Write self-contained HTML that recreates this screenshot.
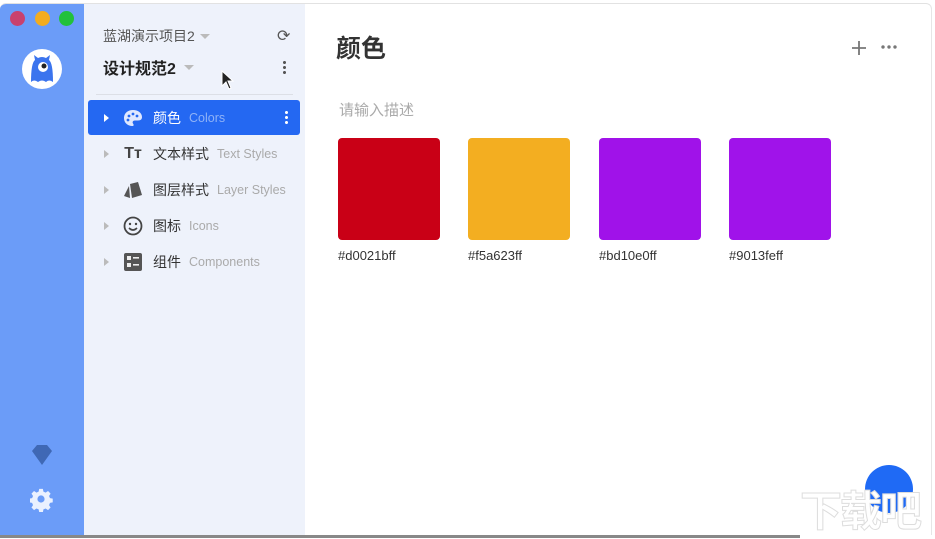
<!DOCTYPE html>
<html><head><meta charset="utf-8"><style>
*{margin:0;padding:0;box-sizing:border-box}
body{width:935px;height:538px;overflow:hidden;background:#fff;font-family:"Liberation Sans","Noto Sans CJK SC",sans-serif;position:relative}
.win{position:absolute;left:0;top:3px;width:932px;height:532px;background:#fff;border-top:1px solid #e2e2e2;border-right:1px solid #e6e6e6;border-radius:6px 6px 0 0;overflow:hidden}
.bar{position:absolute;left:0;top:0;width:84px;height:100%;background:#6b9cf8}
.side{position:absolute;left:84px;top:0;width:221px;height:100%;background:#eef2fb}
.dot{position:absolute;top:7px;width:15px;height:15px;border-radius:50%}
.abs{position:absolute}
.row{position:absolute;left:4px;width:212px;height:35px;display:flex;align-items:center;font-size:14px;color:#333}
.row .tri{width:0;height:0;border-left:5px solid #bbb;border-top:4px solid transparent;border-bottom:4px solid transparent;margin-left:16px;margin-right:14px}
.row .ic{width:20px;height:20px;margin-right:10px;display:flex;align-items:center;justify-content:center}
.row .en{font-size:12.5px;color:#aaa;margin-left:8px}
.sw{position:absolute;top:134px;width:102px;height:102px;border-radius:4px}
.lb{position:absolute;top:244px;font-size:13px;color:#333}
</style></head><body>
<div class="win">
<div class="bar">
 <div class="dot" style="left:10px;background:#c9416e"></div>
 <div class="dot" style="left:35px;background:#f3ac1f"></div>
 <div class="dot" style="left:59px;background:#22c13a"></div>
 <svg class="abs" style="left:22px;top:45px" width="40" height="40" viewBox="0 0 40 40"><circle cx="20" cy="20" r="20" fill="#fff"/><path d="M9 33 Q9 14 13 11 L12 6 L16 9 Q20 7 24 9 L28 6 L27 11 Q31 14 31 33 Q27 30 24 33 Q20 30 16 33 Q12 30 9 33Z" fill="#3b74ee"/><circle cx="21" cy="18" r="5" fill="#fff"/><circle cx="22" cy="17" r="2.5" fill="#222"/></svg>
 <svg class="abs" style="left:30px;top:440px" width="24" height="22" viewBox="0 0 24 22"><path d="M2 7 L7 1 H17 L22 7 L12 21Z" fill="#3f68b5"/></svg>
 <svg class="abs" style="left:30px;top:484px" width="24" height="24" viewBox="0 0 24 24"><path d="M10 1h4l.6 3 2.4 1 2.6-1.7 2.8 2.8L20.7 8.7l1 2.3 3 .6v4l-3 .6-1 2.4 1.7 2.6-2.8 2.8-2.6-1.7-2.4 1-.6 3h-4l-.6-3-2.4-1-2.6 1.7-2.8-2.8 1.7-2.6-1-2.4-3-.6v-4l3-.6 1-2.3L1.6 6.1 4.4 3.3 7 5l2.4-1z" transform="scale(.92)" fill="#eaf1ff"/><circle cx="11" cy="11" r="3.6" fill="#6b9cf8"/></svg>
</div>
<div class="side">
 <div class="abs" style="left:19px;top:22px;font-size:14px;color:#555">蓝湖演示项目2</div>
 <div class="abs" style="left:116px;top:30px;border-top:5px solid #bbb;border-left:5px solid transparent;border-right:5px solid transparent"></div>
 <div class="abs" style="left:193px;top:22px;font-size:16px;color:#555">⟳</div>
 <div class="abs" style="left:19px;top:51px;font-size:16px;font-weight:bold;color:#222">设计规范2</div>
 <div class="abs" style="left:100px;top:61px;border-top:5px solid #bbb;border-left:5px solid transparent;border-right:5px solid transparent"></div>
 <svg class="abs" style="left:137px;top:66px" width="14" height="22" viewBox="0 0 14 22"><path d="M1 1 L1 16 L5 12 L8 19 L10 18 L7 11 L12 11Z" fill="#222" stroke="#fff" stroke-width="1"/></svg>
 <div class="abs" style="left:199px;top:56px;width:3px;height:15px;background:radial-gradient(circle,#555 1.4px,transparent 1.6px) 0 0/3px 5px"></div>
 <div class="abs" style="left:12px;top:90px;width:197px;height:1px;background:#dcdfe6"></div>
 <div class="row" style="top:96px;background:#2468f2;border-radius:3px;color:#fff">
  <div class="tri" style="border-left-color:#fff"></div>
  <div class="ic"><svg width="20" height="18" viewBox="0 0 20 18"><path d="M10 1C4 1 1 5 1 9c0 5 4 8 8 8 2 0 2-1 1-2.5-1-1.5 0-3 2-3h3c3 0 4-1.5 4-3.5C19 4 15 1 10 1z" fill="#dfe8ff"/><circle cx="6" cy="7" r="1.4" fill="#2468f2"/><circle cx="10" cy="5" r="1.4" fill="#2468f2"/><circle cx="14" cy="7" r="1.4" fill="#2468f2"/><circle cx="5" cy="11" r="1.4" fill="#2468f2"/></svg></div>
  <span>颜色</span><span class="en" style="color:#8fb2f7">Colors</span>
  <div style="margin-left:auto;margin-right:12px;width:3px;height:15px;background:radial-gradient(circle,#fff 1.4px,transparent 1.6px) 0 0/3px 5px"></div>
 </div>
 <div class="row" style="top:132px"><div class="tri"></div><div class="ic" style="font-weight:bold;font-size:16px;color:#444">Tт</div><span>文本样式</span><span class="en">Text Styles</span></div>
 <div class="row" style="top:168px"><div class="tri"></div><div class="ic"><svg width="20" height="18" viewBox="0 0 20 18"><path d="M1 15 L6 5 L7 17Z" fill="#555"/><path d="M7 3 L15 1 L19 14 L9 17Z" fill="#555"/></svg></div><span>图层样式</span><span class="en">Layer Styles</span></div>
 <div class="row" style="top:204px"><div class="tri"></div><div class="ic"><svg width="20" height="20" viewBox="0 0 20 20"><circle cx="10" cy="10" r="8.5" fill="none" stroke="#444" stroke-width="1.8"/><circle cx="7" cy="8" r="1.2" fill="#444"/><circle cx="13" cy="8" r="1.2" fill="#444"/><path d="M6 12 Q10 16 14 12" fill="none" stroke="#444" stroke-width="1.6"/></svg></div><span>图标</span><span class="en">Icons</span></div>
 <div class="row" style="top:240px"><div class="tri"></div><div class="ic"><svg width="18" height="18" viewBox="0 0 18 18"><rect x="0" y="0" width="18" height="18" rx="2" fill="#555"/><rect x="3" y="3" width="4" height="4" fill="#eee"/><rect x="3" y="10" width="4" height="4" fill="#eee"/><rect x="9" y="4" width="6" height="1.6" fill="#eee"/><rect x="9" y="11" width="6" height="1.6" fill="#eee"/></svg></div><span>组件</span><span class="en">Components</span></div>
</div>
<div class="abs" style="left:336px;top:25px;font-size:25px;font-weight:bold;color:#333">颜色</div>
<svg class="abs" style="left:851px;top:36px" width="16" height="16" viewBox="0 0 16 16"><path d="M8 1V15M1 8H15" stroke="#777" stroke-width="1.8"/></svg>
<div class="abs" style="left:880px;top:41px;width:17px;height:4px;background:radial-gradient(circle,#777 1.6px,transparent 1.9px) 0 0/6px 4px"></div>
<div class="abs" style="left:339px;top:95px;font-size:15px;color:#aaa">请输入描述</div>
<div class="sw" style="left:338px;background:#c90016"></div>
<div class="sw" style="left:468px;background:#f3ae21"></div>
<div class="sw" style="left:599px;background:#a012e9"></div>
<div class="sw" style="left:729px;background:#a013ea"></div>
<div class="lb" style="left:338px">#d0021bff</div>
<div class="lb" style="left:468px">#f5a623ff</div>
<div class="lb" style="left:599px">#bd10e0ff</div>
<div class="lb" style="left:729px">#9013feff</div>
<div class="abs" style="left:865px;top:461px;width:48px;height:48px;border-radius:50%;background:#1f6af5"></div>
</div>
<div class="abs" style="left:800px;top:478px;font-size:42px;font-weight:bold;color:#fff;-webkit-text-stroke:1px #ddd;letter-spacing:-2px">下载吧</div>
<div class="abs" style="left:0;top:535px;width:800px;height:3px;background:#888"></div>
</body></html>
